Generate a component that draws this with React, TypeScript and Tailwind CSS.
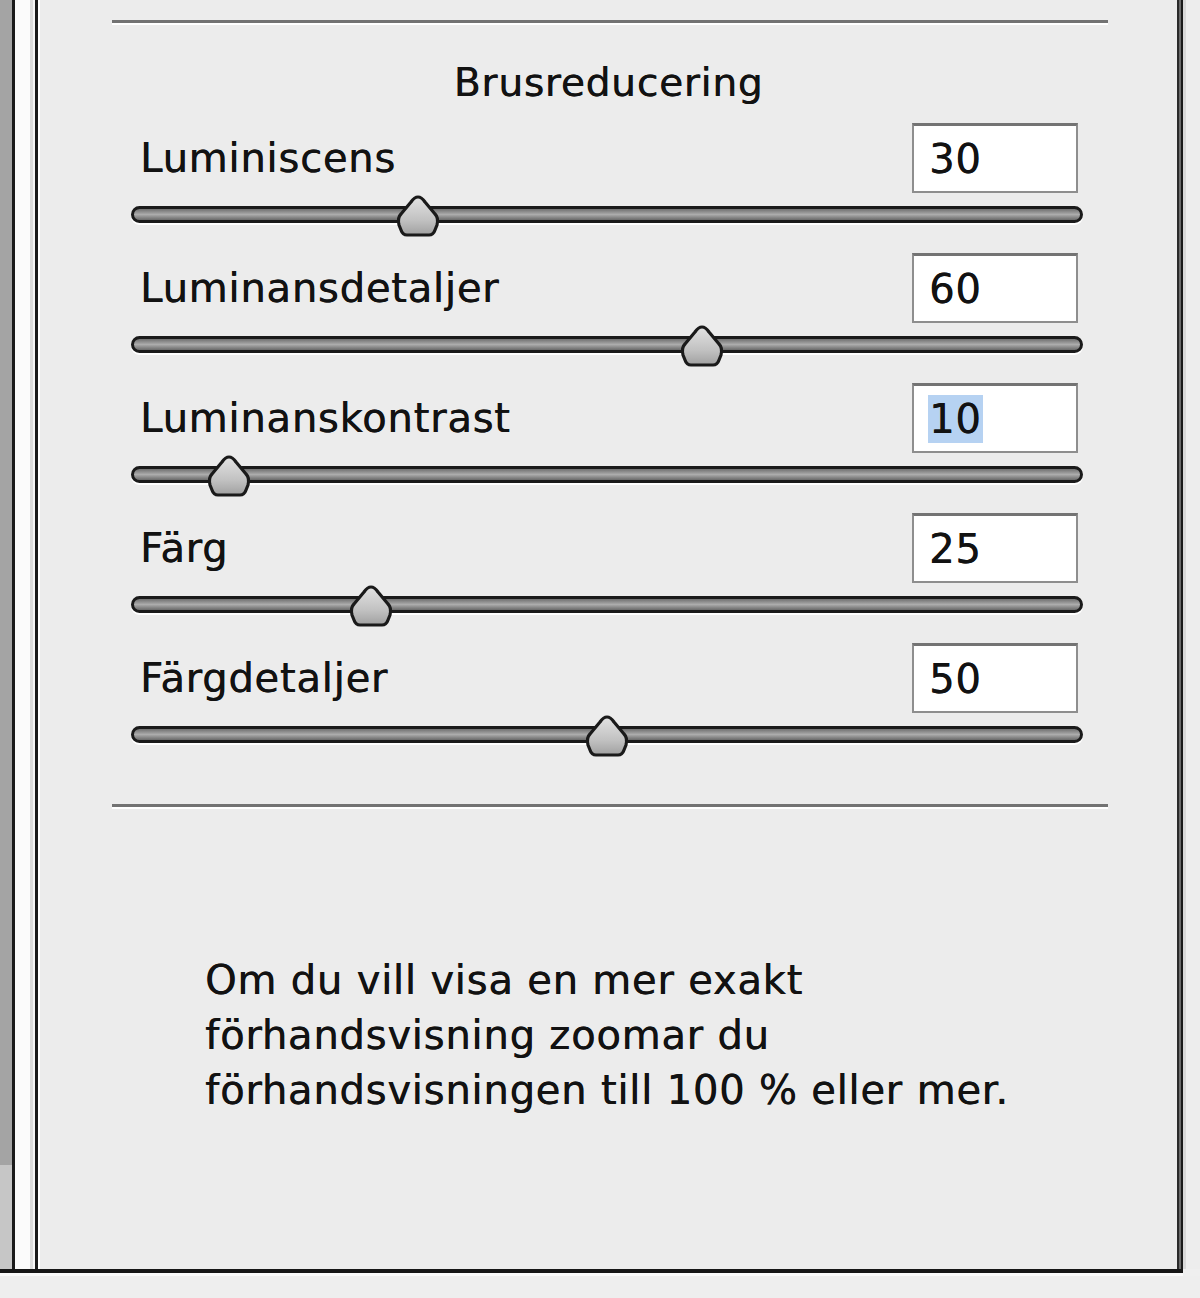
import React from "react";

const rows = [
  { label: "Luminiscens", value: 30 },
  { label: "Luminansdetaljer", value: 60 },
  { label: "Luminanskontrast", value: 10, selected: true },
  { label: "Färg", value: 25 },
  { label: "Färgdetaljer", value: 50 },
];

function Thumb() {
  return (
    <svg width="46" height="46" viewBox="0 0 46 46">
      <defs>
        <linearGradient id="tg" x1="0" y1="0" x2="0" y2="1">
          <stop offset="0" stopColor="#e2e2e2" />
          <stop offset="0.6" stopColor="#c2c2c2" />
          <stop offset="1" stopColor="#a0a0a0" />
        </linearGradient>
      </defs>
      <path
        d="M23 3 C26 3 28 5 30 8 L40 20 C43 23 43 27 42 31 L40 36 C39 39 37 41 34 41 L12 41 C9 41 7 39 6 36 L4 31 C3 27 3 23 6 20 L16 8 C18 5 20 3 23 3 Z"
        fill="url(#tg)"
        stroke="#1a1a1a"
        strokeWidth="3.2"
        strokeLinejoin="round"
      />
    </svg>
  );
}

const txt = "text-[#121212] tracking-[0.8px] [text-shadow:0.5px_0_0_#121212]";

function Row({ label, value, selected }: { label: string; value: number; selected?: boolean }) {
  return (
    <div className="flex flex-col">
      <div className="flex h-[70px] items-center justify-between pl-[100px] pr-[99px]">
        <span className={`text-[40px] leading-none ${txt}`}>{label}</span>
        <div className="flex h-[70px] w-[166px] items-center border-2 border-[#8e8e8e] border-t-[3px] border-t-[#737373] bg-white pl-[14px]">
          <span
            className={
              selected
                ? `bg-[#b6d2f2] px-[1px] text-[40px] leading-[48px] ${txt}`
                : `px-[1px] text-[40px] leading-[48px] ${txt}`
            }
          >
            {value}
          </span>
        </div>
      </div>
      <div className="h-[60px] pl-[91px] pr-[94px] pt-[13px]">
        <div className="relative h-[17px] rounded-full border-[3px] border-[#1a1a1a] bg-gradient-to-b from-[#707070] via-[#acacac] to-[#6a6a6a] shadow-[0_2px_0_#ffffff]">
          <div
            className="absolute top-[-15px]"
            style={{ left: `calc(${value}% - 23px)` }}
          >
            <Thumb />
          </div>
        </div>
      </div>
    </div>
  );
}

function Separator() {
  return (
    <div className="ml-[72px] mr-[69px] h-[5px] border-t-[3px] border-[#727272] border-b-[2px] border-b-white" />
  );
}

export default function App() {
  return (
    <div
      className="flex h-[1298px] w-[1200px] flex-col overflow-hidden bg-[#efefef]"
      style={{ fontFamily: '"DejaVu Sans", "Verdana", sans-serif' }}
    >
      <div className="flex h-[1269px]">
        <div className="flex w-[12px] flex-col">
          <div className="h-[1165px] bg-[#a4a4a4]" />
          <div className="flex-1 bg-[#c6c6c6]" />
        </div>
        <div className="w-[3px] bg-[#1a1a1a]" />
        <div className="flex w-[20px]">
          <div className="w-[15px] bg-[#fbfbfb]" />
          <div className="w-[3px] bg-[#dcdcdc]" />
          <div className="w-[2px] bg-[#f6f6f6]" />
        </div>
        <div className="w-[3px] bg-[#1a1a1a]" />
        <div className="flex w-[1139px] flex-col border-l-[2px] border-l-white bg-[#ececec] pt-[20px]">
          <Separator />
          <div className={`mt-[35px] h-[46px] text-center text-[39px] leading-[46px] ${txt}`}>
            Brusreducering
          </div>
          <div className="mt-[17px] flex flex-col">
            {rows.map((r) => (
              <Row key={r.label} label={r.label} value={r.value} selected={r.selected} />
            ))}
          </div>
          <div className="mt-[31px]">
            <Separator />
          </div>
          <div className={`mt-[144px] pl-[165px] text-[40px] leading-[55px] ${txt}`}>
            <div>Om du vill visa en mer exakt</div>
            <div>förhandsvisning zoomar du</div>
            <div>förhandsvisningen till 100 % eller mer.</div>
          </div>
        </div>
        <div className="w-[2px] bg-[#2a2a2a]" />
        <div className="w-[2px] bg-[#6a6a6a]" />
        <div className="w-[2px] bg-[#1a1a1a]" />
        <div className="w-[3px] bg-[#d8d8d8]" />
        <div className="flex-1 bg-[#ededed]" />
      </div>
      <div className="h-[4px] w-[1183px] bg-[#161616]" />
      <div className="h-[3px] w-[1183px] bg-[#fafafa]" />
      <div className="flex-1 bg-[#eeeeee]" />
    </div>
  );
}
